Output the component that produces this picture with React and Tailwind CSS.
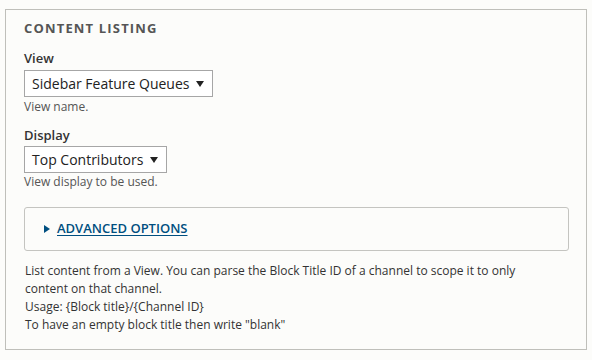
import React from 'react';

const Caret = () => (
  <svg width="8" height="6" viewBox="0 0 8 6" className="ml-[7px] shrink-0">
    <path d="M0 0 H8 L4 6 Z" fill="#222" />
  </svg>
);

const SelectBox = ({ value }) => (
  <div className="inline-flex h-[27px] items-center border border-[#a6a6a6] bg-white pl-[7px] pr-[8px] text-[14px] leading-none text-[#222]">
    <span>{value}</span>
    <Caret />
  </div>
);

const App = () => {
  return (
    <div className="min-h-[360px] w-[592px] bg-[#fcfcfa] pt-[9px] pl-[5px] font-['Open_Sans',sans-serif] text-[#333]">
      <div className="h-[341px] w-[582px] border border-[#bfbfba] pl-[18px] pr-[18px] pt-[9px]">
        {/* Title */}
        <h2 className="text-[13px] font-bold uppercase leading-[18px] tracking-[0.09em] text-[#555]">
          Content listing
        </h2>

        {/* View */}
        <div className="mt-[12px]">
          <label className="block text-[13px] font-semibold leading-[18px] text-[#333]">View</label>
          <div className="mt-[3px]">
            <SelectBox value="Sidebar Feature Queues" />
          </div>
          <p className="mt-[1px] text-[12px] leading-[18px] text-[#555]">View name.</p>
        </div>

        {/* Display */}
        <div className="mt-[10px]">
          <label className="block text-[13px] font-semibold leading-[18px] text-[#333]">Display</label>
          <div className="mt-[2px]">
            <SelectBox value="Top Contributors" />
          </div>
          <p className="mt-0 text-[12px] leading-[18px] text-[#555]">View display to be used.</p>
        </div>

        {/* Advanced options */}
        <div className="mt-[16px] flex h-[44px] w-[545px] items-center rounded-[3px] border border-[#c4c4c0] bg-[#fcfcfa] pl-[19px]">
          <svg width="6" height="8" viewBox="0 0 6 8" className="mr-[7px]">
            <path d="M0 0 L6 4 L0 8 Z" fill="#004f80" />
          </svg>
          <a className="text-[13px] font-semibold uppercase text-[#004f80] underline underline-offset-2">
            Advanced options
          </a>
        </div>

        {/* Description */}
        <div className="mt-[11px] pl-[1px] text-[12px] leading-[18px] text-[#333]">
          <p>
            List content from a View. You can parse the Block Title ID of a channel to scope it to only
            <br />
            content on that channel.
          </p>
          <p>Usage: {'{Block title}/{Channel ID}'}</p>
          <p>To have an empty block title then write "blank"</p>
        </div>
      </div>
    </div>
  );
};

export default App;
